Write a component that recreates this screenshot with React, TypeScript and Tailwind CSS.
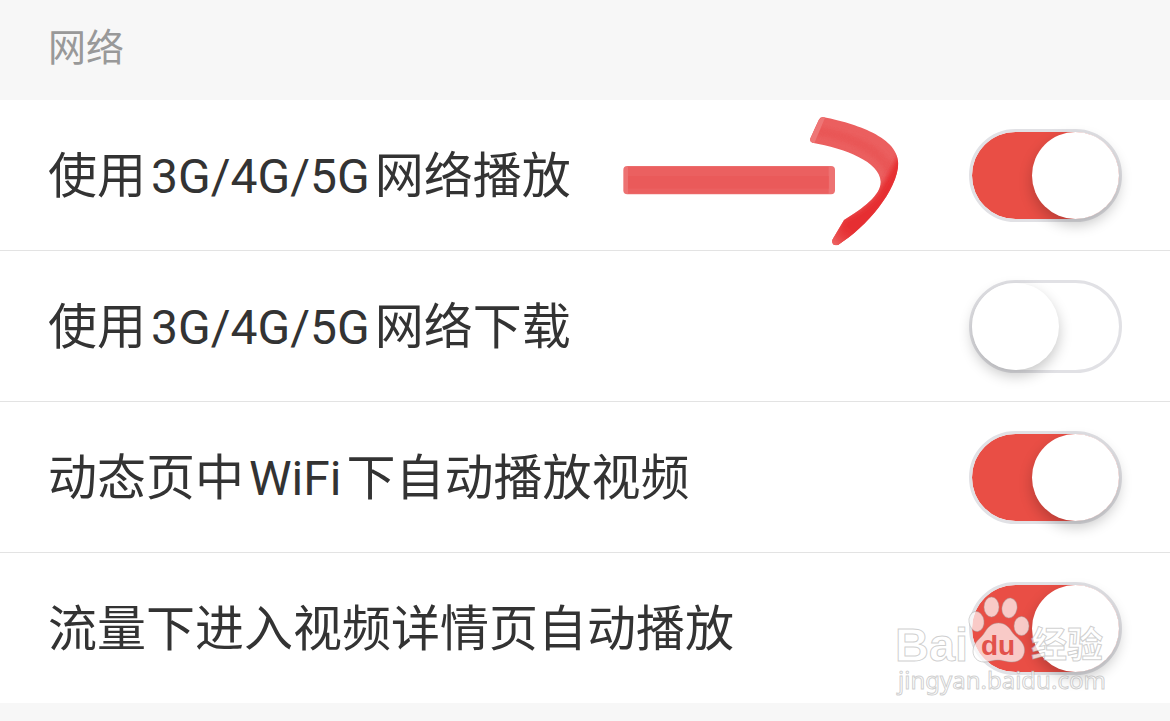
import { useState } from "react";

type Setting = { id: string; before: string; latin?: string; after?: string; on: boolean };

const SETTINGS: Setting[] = [
  { id: "play", before: "使用", latin: "3G/4G/5G", after: "网络播放", on: true },
  { id: "download", before: "使用", latin: "3G/4G/5G", after: "网络下载", on: false },
  { id: "feed", before: "动态页中", latin: "WiFi", after: "下自动播放视频", on: true },
  { id: "detail", before: "流量下进入视频详情页自动播放", on: true },
];

function ArrowMark() {
  return (
    <svg
      className="pointer-events-none absolute top-0 left-[600px] h-[160px] w-[320px]"
      viewBox="0 0 960 480"
      aria-hidden="true"
    >
      <defs>
        <linearGradient id="tip" gradientUnits="userSpaceOnUse" x1="750" y1="370" x2="700" y2="430">
          <stop offset="0" stopColor="#e62e30" stopOpacity="0" />
          <stop offset="1" stopColor="#ec6262" />
        </linearGradient>
        <filter id="soft">
          <feGaussianBlur stdDeviation="2" />
        </filter>
        <filter id="softer" x="-20%" y="-20%" width="140%" height="140%">
          <feGaussianBlur stdDeviation="8" />
        </filter>
        <clipPath id="hook">
          <path d="M668 51C745 66 895 105 895 190C893 270 800 382 715 434C703 440 693 430 698 418L732 360C790 325 843 285 842 245C840 185 735 145 637 128Q628 124 631 115L656 60Q661 50 668 51Z" />
        </clipPath>
      </defs>
      <g filter="url(#soft)">
        <rect x="70" y="198" width="635" height="85" rx="12" fill="#ed7272" />
        <rect x="84" y="200" width="602" height="81" fill="#eb6161" />
        <rect x="84" y="228" width="602" height="38" fill="#ea5a5a" />
      </g>
      <g filter="url(#soft)">
        <g clipPath="url(#hook)">
          <rect x="620" y="40" width="290" height="410" fill="#eb5f5f" />
          <path d="M645 92C740 105 850 150 868 215" fill="none" stroke="#e95757" strokeWidth="30" filter="url(#softer)" />
          <path d="M668 51L656 60L625 128L642 132L676 51Z" fill="#ee7676" />
          <path
            d="M900 160C880 190 872 215 842 262C830 295 780 335 730 358L690 440L730 440C830 370 900 270 910 190Z"
            fill="#e62e30"
            filter="url(#softer)"
          />
          <path d="M738 350L680 420L700 450L790 380Z" fill="url(#tip)" />
        </g>
      </g>
    </svg>
  );
}

function Watermark() {
  return (
    <svg
      className="pointer-events-none absolute right-[60px] bottom-[3px] h-[110px] w-[220px]"
      viewBox="890 590 220 110"
      aria-hidden="true"
    >
      <g fill="#ffffff" fillOpacity="0.7" stroke="#a0a0a0" strokeOpacity="0.45" strokeWidth="1">
        <ellipse cx="976.5" cy="621.5" rx="7.5" ry="10" transform="rotate(-8 976.5 621.5)" />
        <ellipse cx="991.5" cy="607" rx="7.5" ry="10" />
        <ellipse cx="1009.5" cy="608" rx="7.5" ry="10" transform="rotate(10 1009.5 608)" />
        <ellipse cx="1021.5" cy="626" rx="7.5" ry="9.5" />
        <path d="M998.500 623C1005 623 1009 627 1012 632C1016 638 1024.500 641 1024.500 650C1024.500 658 1019 662 1012 662C1006 662 1003 660 998 660C992 660 989 662 984 662C977 662 973 657 973 651C973 642 981 639 985 632C988 627 992 623 998.500 623Z" />
      </g>
      <text x="981" y="655" fontSize="28" fontFamily="'Liberation Sans', sans-serif" fontWeight="700" fill="#e2524b">
        du
      </text>
      <g fill="#ffffff" fillOpacity="0.75" stroke="#a0a0a0" strokeOpacity="0.5" strokeWidth="1" fontWeight="700">
        <text x="895" y="661" fontSize="47" fontFamily="'Liberation Sans', sans-serif">
          Bai
        </text>
        <text x="1031" y="658" fontSize="36" fontFamily="'Noto Sans CJK SC', sans-serif">
          经验
        </text>
        <text x="898" y="689" fontSize="24" fontWeight="400" fontFamily="'Noto Sans', sans-serif">
          jingyan.baidu.com
        </text>
      </g>
    </svg>
  );
}

function Row({ setting, last }: { setting: Setting; last: boolean }) {
  const [on, setOn] = useState(setting.on);
  return (
    <li
      className={
        last
          ? "relative flex h-[150px] items-center justify-between bg-white px-12"
          : "relative flex h-[151px] items-center justify-between border-b border-[#e3e3e3] bg-white px-12"
      }
    >
      <label htmlFor={setting.id} className="pt-1 text-[49px] leading-[60px] whitespace-nowrap text-[#333333]">
        {setting.before}
        {setting.latin && <span className="mx-[5px] text-[48px]">{setting.latin}</span>}
        {setting.after}
      </label>
      <input
        id={setting.id}
        type="checkbox"
        role="switch"
        checked={on}
        onChange={(e) => setOn(e.target.checked)}
        className="h-[93px] w-[153px] shrink-0 cursor-pointer appearance-none rounded-full border-[3px] border-[#e1e1e5] bg-white before:block before:size-[87px] before:rounded-full before:bg-white before:shadow-[0_6px_14px_rgba(0,0,0,0.22)] before:transition-transform checked:bg-[#e94e45] checked:bg-clip-padding checked:before:translate-x-[60px]"
      />
      {setting.id === "play" && <ArrowMark />}
      {setting.id === "detail" && <Watermark />}
    </li>
  );
}

export default function App() {
  return (
    <main className="min-h-screen bg-[#f7f7f7] font-[Roboto,'Noto_Sans_CJK_SC',sans-serif]">
      <h1 className="flex h-[100px] items-center px-12 pb-1 text-[38px] font-normal text-[#999999]">网络</h1>
      <ul>
        {SETTINGS.map((s, i) => (
          <Row key={s.id} setting={s} last={i === SETTINGS.length - 1} />
        ))}
      </ul>
    </main>
  );
}
